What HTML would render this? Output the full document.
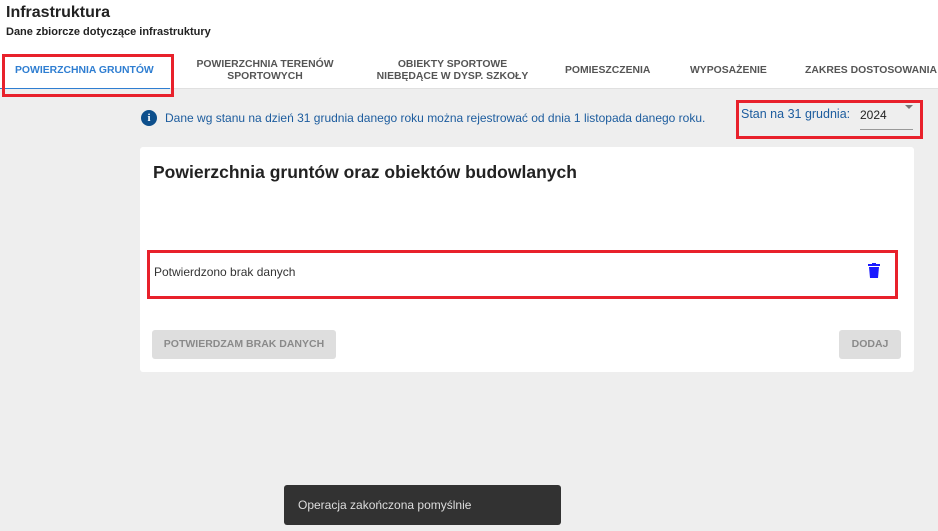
<!DOCTYPE html>
<html><head><meta charset="utf-8"><style>
*{box-sizing:border-box;margin:0;padding:0}
body{width:938px;height:531px;overflow:hidden;background:#eeeeee;font-family:"Liberation Sans",sans-serif;position:relative;color:#222}
.hdr{position:absolute;left:0;top:0;width:938px;height:89px;background:#fff;border-bottom:1px solid #e0e0e0}
.t1{position:absolute;left:6px;top:4px;font-size:16px;font-weight:bold;color:#222}
.t2{position:absolute;left:6px;top:26px;font-size:11px;font-weight:bold;color:#222}
.tab{position:absolute;font-size:10.4px;font-weight:bold;color:#555;text-align:center;line-height:12px;white-space:nowrap}
.red{position:absolute;border:3px solid #e8212b}
.info{position:absolute;left:141px;top:110px;width:16px;height:16px;border-radius:50%;background:#0d4f8c;color:#fff;font-size:11px;font-weight:bold;text-align:center;line-height:16px;font-family:"Liberation Serif",serif}
.card{position:absolute;left:140px;top:147px;width:774px;height:225px;background:#fff;border-radius:3px}
.btn{position:absolute;background:#dedede;color:#8a8a8a;font-size:10.5px;font-weight:bold;text-align:center;border-radius:3px;white-space:nowrap}
.toast{position:absolute;left:284px;top:485px;width:277px;height:40px;background:#323232;border-radius:3px;color:#ddd;font-size:12px;line-height:40px;padding-left:14px}
</style></head><body>
<div class="hdr">
<div class="t1">Infrastruktura</div>
<div class="t2">Dane zbiorcze dotyczące infrastruktury</div>
<div class="tab" style="left:15px;top:65px;color:#2f7ed1">POWIERZCHNIA GRUNTÓW</div>
<div style="position:absolute;left:0;top:88px;width:170px;height:1px;background:#2f7ed1"></div>
<div class="tab" style="left:190px;top:59px;width:150px">POWIERZCHNIA TERENÓW<br>SPORTOWYCH</div>
<div class="tab" style="left:370px;top:59px;width:165px">OBIEKTY SPORTOWE<br>NIEBĘDĄCE W DYSP. SZKOŁY</div>
<div class="tab" style="left:565px;top:65px">POMIESZCZENIA</div>
<div class="tab" style="left:690px;top:65px">WYPOSAŻENIE</div>
<div class="tab" style="left:805px;top:65px">ZAKRES DOSTOSOWANIA</div>
</div>
<div class="red" style="left:2px;top:54px;width:172px;height:43px"></div>
<div class="info">i</div>
<div style="position:absolute;left:165px;top:111px;font-size:12px;color:#1c5c9e">Dane wg stanu na dzień 31 grudnia danego roku można rejestrować od dnia 1 listopada danego roku.</div>
<div style="position:absolute;left:741px;top:107px;font-size:12.5px;color:#1c5c9e">Stan na 31 grudnia:</div>
<div style="position:absolute;left:860px;top:108px;font-size:12px;color:#222">2024</div>
<div style="position:absolute;left:860px;top:129px;width:53px;height:1px;background:#999"></div>
<div style="position:absolute;left:905px;top:105px;width:0;height:0;border-left:4px solid transparent;border-right:4px solid transparent;border-top:4px solid #777"></div>
<div class="red" style="left:736px;top:100px;width:187px;height:39px"></div>
<div class="card">
<div style="position:absolute;left:13px;top:15px;font-size:17.5px;font-weight:bold;color:#222">Powierzchnia gruntów oraz obiektów budowlanych</div>
<div style="position:absolute;left:14px;top:118px;font-size:12px;color:#333">Potwierdzono brak danych</div>
<svg style="position:absolute;left:727px;top:116px" width="14" height="15" viewBox="0 0 14 15"><rect x="1" y="1" width="12" height="2" fill="#1a1aff"/><rect x="5" y="0" width="4" height="2" fill="#1a1aff"/><path d="M2 4h10l-1 11H3z" fill="#1a1aff"/></svg>
</div>
<div class="red" style="left:147px;top:250px;width:751px;height:49px"></div>
<div class="btn" style="left:152px;top:330px;width:184px;height:29px;line-height:29px">POTWIERDZAM BRAK DANYCH</div>
<div class="btn" style="left:839px;top:330px;width:62px;height:29px;line-height:29px">DODAJ</div>
<div class="toast">Operacja zakończona pomyślnie</div>
</body></html>
